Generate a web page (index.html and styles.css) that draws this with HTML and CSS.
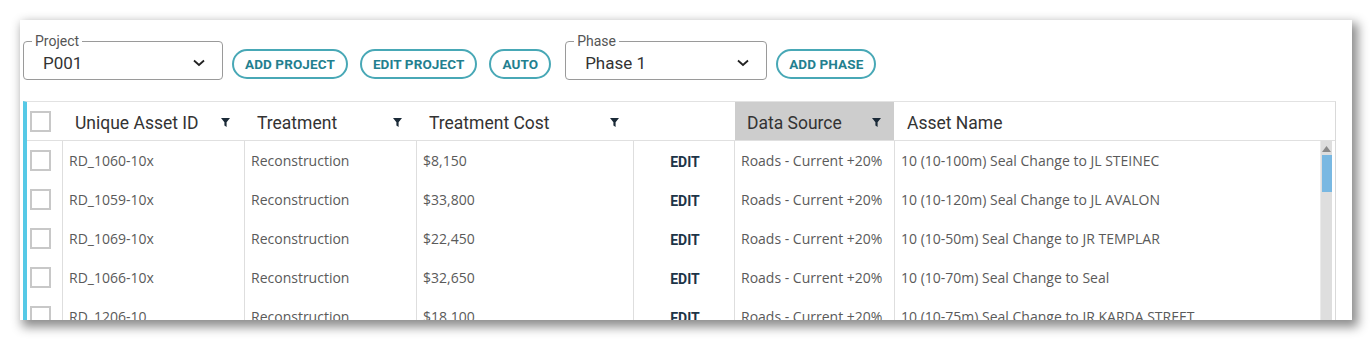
FILE: index.html
```html
<!DOCTYPE html>
<html>
<head>
<meta charset="utf-8">
<link rel="stylesheet" href="styles.css">
</head>
<body>
<div class="card">
  <div class="toolbar">
    <fieldset class="select project">
      <legend>Project</legend>
      <span class="value">P001</span>
      <svg class="chev" width="12" height="8" viewBox="0 0 12 8"><path d="M1 1.5 L6 6 L11 1.5" fill="none" stroke="#222" stroke-width="1.8"/></svg>
    </fieldset>
    <button class="pill">ADD PROJECT</button>
    <button class="pill">EDIT PROJECT</button>
    <button class="pill">AUTO</button>
    <fieldset class="select phase">
      <legend>Phase</legend>
      <span class="value">Phase 1</span>
      <svg class="chev" width="12" height="8" viewBox="0 0 12 8"><path d="M1 1.5 L6 6 L11 1.5" fill="none" stroke="#222" stroke-width="1.8"/></svg>
    </fieldset>
    <button class="pill">ADD PHASE</button>
  </div>

  <div class="grid">
    <div class="head">
      <div class="hcell chk"><span class="box"></span></div>
      <div class="hcell">Unique Asset ID<svg class="filter" width="9" height="9" viewBox="0 0 9 9"><path d="M0 0 H9 L5.6 4.2 V9 L3.4 7.6 V4.2 Z" fill="#1b2a38"/></svg></div>
      <div class="hcell">Treatment<svg class="filter" width="9" height="9" viewBox="0 0 9 9"><path d="M0 0 H9 L5.6 4.2 V9 L3.4 7.6 V4.2 Z" fill="#1b2a38"/></svg></div>
      <div class="hcell">Treatment Cost<svg class="filter" width="9" height="9" viewBox="0 0 9 9"><path d="M0 0 H9 L5.6 4.2 V9 L3.4 7.6 V4.2 Z" fill="#1b2a38"/></svg></div>
      <div class="hcell"></div>
      <div class="hcell sorted">Data Source<svg class="filter" width="9" height="9" viewBox="0 0 9 9"><path d="M0 0 H9 L5.6 4.2 V9 L3.4 7.6 V4.2 Z" fill="#1b2a38"/></svg></div>
      <div class="hcell last">Asset Name</div>
    </div>
    <div class="body">
      <div class="rows">
        <div class="row">
          <div class="cell chk"><span class="box"></span></div>
          <div class="cell">RD_1060-10x</div>
          <div class="cell">Reconstruction</div>
          <div class="cell">$8,150</div>
          <div class="cell edit">EDIT</div>
          <div class="cell">Roads - Current +20%</div>
          <div class="cell">10 (10-100m) Seal Change to JL STEINEC</div>
        </div>
        <div class="row">
          <div class="cell chk"><span class="box"></span></div>
          <div class="cell">RD_1059-10x</div>
          <div class="cell">Reconstruction</div>
          <div class="cell">$33,800</div>
          <div class="cell edit">EDIT</div>
          <div class="cell">Roads - Current +20%</div>
          <div class="cell">10 (10-120m) Seal Change to JL AVALON</div>
        </div>
        <div class="row">
          <div class="cell chk"><span class="box"></span></div>
          <div class="cell">RD_1069-10x</div>
          <div class="cell">Reconstruction</div>
          <div class="cell">$22,450</div>
          <div class="cell edit">EDIT</div>
          <div class="cell">Roads - Current +20%</div>
          <div class="cell">10 (10-50m) Seal Change to JR TEMPLAR</div>
        </div>
        <div class="row">
          <div class="cell chk"><span class="box"></span></div>
          <div class="cell">RD_1066-10x</div>
          <div class="cell">Reconstruction</div>
          <div class="cell">$32,650</div>
          <div class="cell edit">EDIT</div>
          <div class="cell">Roads - Current +20%</div>
          <div class="cell">10 (10-70m) Seal Change to Seal</div>
        </div>
        <div class="row">
          <div class="cell chk"><span class="box"></span></div>
          <div class="cell">RD_1206-10</div>
          <div class="cell">Reconstruction</div>
          <div class="cell">$18,100</div>
          <div class="cell edit">EDIT</div>
          <div class="cell">Roads - Current +20%</div>
          <div class="cell">10 (10-75m) Seal Change to JR KARDA STREET</div>
        </div>
      </div>
      <div class="scrollbar">
        <svg class="arrow" width="9" height="6" viewBox="0 0 9 6"><path d="M0 6 L4.5 0 L9 6 Z" fill="#8a8a8a"/></svg>
        <div class="thumb"></div>
      </div>
    </div>
  </div>
</div>
</body>
</html>
```

FILE: styles.css
```css
html, body {
  margin: 0;
  padding: 0;
  background: #ffffff;
}

body {
  min-height: 340px;
  padding-top: 20px;
  box-sizing: border-box;
}

.card {
  margin: 0 0 0 20px;
  width: 1332px;
  height: 300px;
  background: #fff;
  box-shadow: 4px 5px 10px 2px rgba(0, 0, 0, 0.45);
  overflow: hidden;
  padding: 13px 16px 0 3px;
  box-sizing: border-box;
}

.toolbar {
  display: flex;
  align-items: flex-end;
  height: 47px;
}

.select {
  margin: 0;
  padding: 0 0 0 19px;
  border: 1px solid #9a9a9a;
  border-radius: 4px;
  height: 46px;
  box-sizing: border-box;
  display: flex;
  align-items: center;
  font-family: Roboto, "Liberation Sans", sans-serif;
}

.select legend {
  font-size: 14px;
  line-height: 15px;
  color: #555;
  padding: 0 3px;
  margin-left: -11px;
}

.select .value {
  flex: 1;
  font-size: 17px;
  color: #333;
  margin-top: -2px;
}

.select .chev {
  margin: -3px 17px 0 0;
}

.project { width: 200px; }
.phase { width: 202px; margin-left: 14px; }

.pill {
  height: 30px;
  margin: 0 0 1px 9px;
  padding: 0 11px;
  border: 2px solid #48a8b6;
  border-radius: 15px;
  background: #fff;
  color: #237f8f;
  font-family: Roboto, "Liberation Sans", sans-serif;
  font-weight: 700;
  font-size: 13.5px;
  letter-spacing: 0.1px;
}

.pill + .pill { margin-left: 12px; }

.grid {
  margin-top: 21px;
  border-top: 1px solid #e2e2e2;
  border-left: 4px solid #56c9e6;
  border-right: 1px solid #d9d9d9;
  height: 300px;
}

.head {
  display: grid;
  grid-template-columns: 35px 182px 172px 217px 101px 160px 1fr;
  height: 38px;
  border-bottom: 1px solid #e0e0e0;
}

.hcell {
  display: flex;
  align-items: center;
  justify-content: space-between;
  padding: 3px 14px 0 13px;
  font-family: Roboto, "Liberation Sans", sans-serif;
  font-size: 17.5px;
  color: #333;
}

.hcell .filter { flex: none; }
.hcell.sorted { background: #cdcdcd; margin-left: 1px; padding-left: 12px; padding-right: 13px; }
.hcell.chk, .cell.chk { padding: 0 0 0 3px; justify-content: flex-start; }

.box {
  width: 21px;
  height: 21px;
  border: 2px solid #c8c8c8;
  box-sizing: border-box;
  display: block;
}

.body {
  display: flex;
}

.rows {
  flex: 1;
}

.row {
  display: grid;
  grid-template-columns: 35px 182px 172px 217px 101px 160px 1fr;
  height: 39px;
}

.cell {
  display: flex;
  align-items: center;
  padding: 0 0 0 6px;
  border-left: 1px solid #dedede;
  font-family: "Open Sans", "Noto Sans", sans-serif;
  font-size: 14px;
  color: #5a5a5a;
  white-space: nowrap;
}

.cell.chk { border-left: none; }

.cell.edit {
  justify-content: center;
  padding: 2px 0 0 2px;
  font-family: Roboto, "Liberation Sans", sans-serif;
  font-weight: 700;
  font-size: 14px;
  color: #1d3447;
}

.scrollbar {
  width: 11px;
  margin-right: 3px;
  background: #dedede;
  display: flex;
  flex-direction: column;
  align-items: center;
  border-left: 1px solid #eaeaea;
}

.arrow { margin-top: 5px; flex: none; }

.thumb {
  width: 10px;
  height: 37px;
  margin-top: 3px;
  background: #79b8e2;
}
```
